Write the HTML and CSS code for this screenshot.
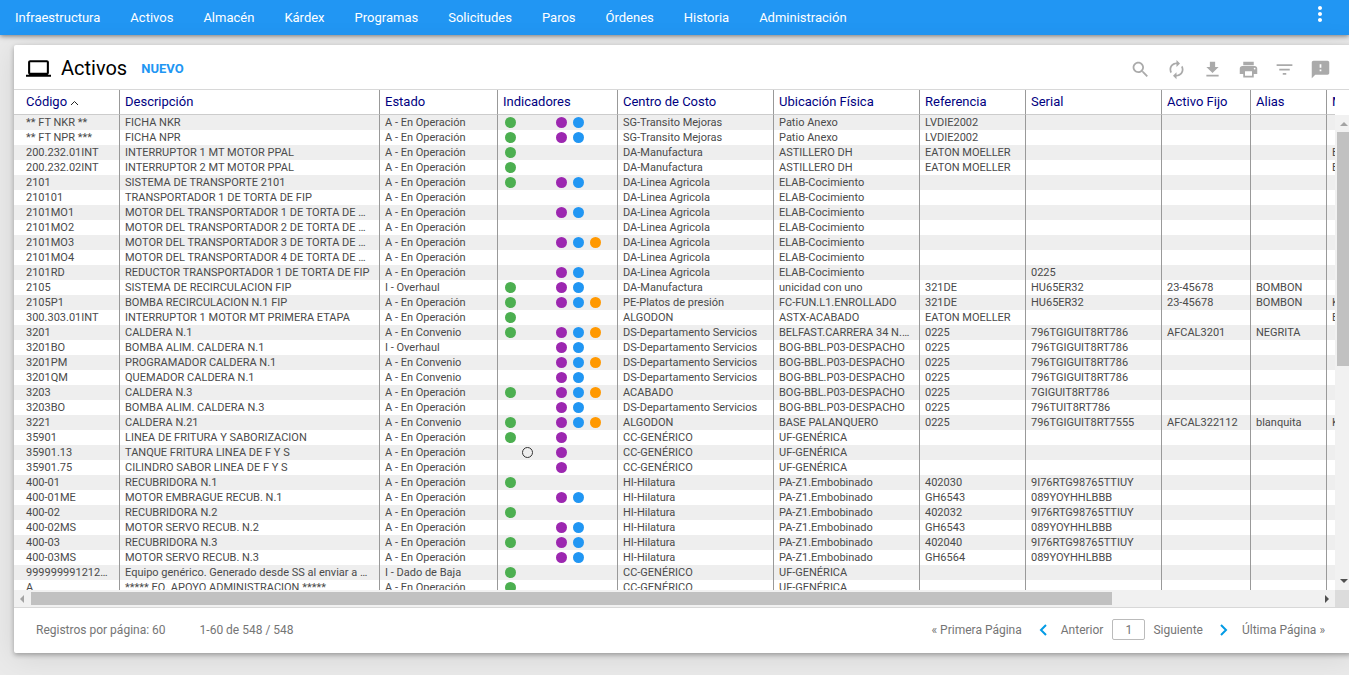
FILE: index.html
```html
<!DOCTYPE html>
<html lang="es">
<head>
  <meta charset="UTF-8" />
  <meta name="viewport" content="width=device-width, initial-scale=1.0"/>
  <title>Activos</title>
  <link rel="stylesheet" href="styles.css">
</head>
<body>
  <nav class="navbar">
    <a href="#">Infraestructura</a>
    <a href="#">Activos</a>
    <a href="#">Almacén</a>
    <a href="#">Kárdex</a>
    <a href="#">Programas</a>
    <a href="#">Solicitudes</a>
    <a href="#">Paros</a>
    <a href="#">Órdenes</a>
    <a href="#">Historia</a>
    <a href="#">Administración</a>
    <button class="more" aria-label="Más opciones">
      <svg viewBox="0 0 24 24"><path d="M12 8c1.1 0 2-.9 2-2s-.9-2-2-2-2 .9-2 2 .9 2 2 2zm0 2c-1.1 0-2 .9-2 2s.9 2 2 2 2-.9 2-2-.9-2-2-2zm0 6c-1.1 0-2 .9-2 2s.9 2 2 2 2-.9 2-2-.9-2-2-2z"/></svg>
    </button>
  </nav>

  <main class="panel">
    <header class="panel-head">
      <svg class="laptop" viewBox="0 0 24 24"><path d="M20 18c1.100 0 1.990-.9 1.990-2L22 6c0-1.100-.9-2-2-2H4c-1.100 0-2 .9-2 2v10c0 1.100.9 2 2 2H0v2h24v-2h-4zM4 6h16v10H4V6z"/></svg>
      <h1>Activos</h1>
      <button class="new">NUEVO</button>
      <div class="tools">
        <button aria-label="Buscar"><svg viewBox="0 0 24 24"><path d="M15.500 14h-.79l-.28-.27C15.410 12.590 16 11.110 16 9.500 16 5.910 13.090 3 9.500 3S3 5.910 3 9.500 5.910 16 9.500 16c1.610 0 3.090-.59 4.230-1.570l.27.28v.79l5 4.990L20.490 19l-4.990-5zm-6 0C7.010 14 5 11.990 5 9.500S7.010 5 9.500 5 14 7.010 14 9.500 11.990 14 9.500 14z"/></svg></button>
        <button aria-label="Actualizar"><svg viewBox="0 0 24 24"><path d="M12 6v3l4-4-4-4v3c-4.420 0-8 3.580-8 8 0 1.570.46 3.030 1.240 4.260L6.700 14.800c-.45-.83-.7-1.790-.7-2.800 0-3.310 2.690-6 6-6zm6.760 1.740L17.300 9.200c.44.84.7 1.790.7 2.800 0 3.310-2.690 6-6 6v-3l-4 4 4 4v-3c4.420 0 8-3.580 8-8 0-1.570-.46-3.030-1.240-4.260z"/></svg></button>
        <button aria-label="Descargar"><svg viewBox="0 0 24 24"><path d="M19 9h-4V3H9v6H5l7 7 7-7zM5 18v2h14v-2H5z"/></svg></button>
        <button aria-label="Imprimir"><svg viewBox="0 0 24 24"><path d="M19 8H5c-1.660 0-3 1.340-3 3v6h4v4h12v-4h4v-6c0-1.660-1.340-3-3-3zm-3 11H8v-5h8v5zm3-7c-.55 0-1-.45-1-1s.45-1 1-1 1 .45 1 1-.45 1-1 1zm-1-9H6v4h12V3z"/></svg></button>
        <button aria-label="Filtrar"><svg viewBox="0 0 24 24"><path d="M10 18h4v-2h-4v2zM3 6v2h18V6H3zm3 7h12v-2H6v2z"/></svg></button>
        <button aria-label="Comentarios"><svg viewBox="0 0 24 24"><path d="M20 2H4c-1.100 0-1.990.9-1.990 2L2 22l4-4h14c1.100 0 2-.9 2-2V4c0-1.100-.9-2-2-2zm-7 12h-2v-2h2v2zm0-4h-2V6h2v4z"/></svg></button>
      </div>
    </header>

    <div class="grid">
      <div class="grid-view">
        <table>
          <colgroup>
            <col class="c-codigo"><col class="c-desc"><col class="c-estado"><col class="c-ind"><col class="c-centro"><col class="c-ubic"><col class="c-ref"><col class="c-serial"><col class="c-fijo"><col class="c-alias"><col class="c-marca">
          </colgroup>
          <thead>
            <tr>
              <th>Código <svg class="sort" viewBox="0 0 9 6"><path d="M1 5l3.500-3.500L8 5"/></svg></th>
              <th>Descripción</th>
              <th>Estado</th>
              <th>Indicadores</th>
              <th>Centro de Costo</th>
              <th>Ubicación Física</th>
              <th>Referencia</th>
              <th>Serial</th>
              <th>Activo Fijo</th>
              <th>Alias</th>
              <th>Marca</th>
            </tr>
          </thead>
          <tbody id="rows"></tbody>
        </table>
      </div>
      <div class="vbar">
        <svg viewBox="0 0 17 17"><path class="off" d="M5 11l4-4 4 4z"/></svg>
        <div class="vtrack"><div class="vthumb"></div></div>
        <svg viewBox="0 0 17 17"><path d="M5 6l4 4 4-4z"/></svg>
      </div>
      <div class="hbar">
        <svg viewBox="0 0 17 17"><path class="off" d="M10 5v8L6 9z"/></svg>
        <div class="htrack"><div class="hthumb"></div></div>
        <svg viewBox="0 0 17 17"><path d="M7 5v8l4-4z"/></svg>
      </div>
      <div class="corner"></div>
    </div>

    <footer class="pager">
      <span>Registros por página: 60</span>
      <span class="range">1-60 de 548 / 548</span>
      <div class="pages">
        <a href="#">« Primera Página</a>
        <a href="#" class="prev"><svg viewBox="0 0 8 12"><path d="M7 1L2 6l5 5"/></svg>Anterior</a>
        <input type="text" value="1" aria-label="Página">
        <a href="#" class="next">Siguiente<svg viewBox="0 0 8 12"><path d="M1 1l5 5-5 5"/></svg></a>
        <a href="#">Última Página »</a>
      </div>
    </footer>
  </main>

  <script src="script.js"></script>
</body>
</html>
```

FILE: styles.css
```css
* {
  margin: 0;
  padding: 0;
  box-sizing: border-box;
}

body {
  display: flex;
  flex-direction: column;
  height: 100vh;
  overflow: hidden;
  background: #eaeaea;
  font-family: Roboto, sans-serif;
  color: #4a4a4a;
}

button {
  border: none;
  background: none;
  color: inherit;
  font-family: inherit;
  cursor: pointer;
}

a {
  color: inherit;
  text-decoration: none;
}

svg {
  display: block;
  fill: currentColor;
}

/* top menu */
.navbar {
  display: flex;
  align-items: center;
  flex: none;
  height: 35px;
  background: #2196f3;
  box-shadow: 0 1px 5px rgba(0, 0, 0, 0.5);
  color: #fff;
  font-size: 13px;
}

.navbar a {
  padding: 0 15px;
}

.more {
  margin: 0 17px 7px auto;
}

.more svg {
  width: 24px;
  height: 24px;
}

/* main card */
.panel {
  display: flex;
  flex-direction: column;
  flex: 1;
  min-height: 0;
  margin: 10px -3px 22px 14px;
  background: #fff;
  border-radius: 2px;
  box-shadow: 0 2px 5px rgba(0, 0, 0, 0.3), 0 4px 30px rgba(0, 0, 0, 0.1);
}

.panel-head {
  display: flex;
  align-items: center;
  flex: none;
  height: 45px;
  padding: 2px 21px 0 12px;
  border-bottom: 1px solid #d8d8d8;
  color: #000;
}

.laptop {
  width: 25px;
  height: 25px;
}

h1 {
  margin-left: 10px;
  font-size: 20px;
  font-weight: 400;
}

.new {
  margin-left: 14px;
  color: #2196f3;
  font-size: 13px;
  font-weight: 700;
}

.tools {
  display: flex;
  gap: 15px;
  margin-left: auto;
  padding-top: 3px;
  color: #aaa;
}

.tools svg {
  width: 21px;
  height: 21px;
}

/* table */
.grid {
  display: grid;
  grid-template-columns: 1fr 17px;
  grid-template-rows: 1fr 17px;
  flex: 1;
  min-height: 0;
}

.grid-view {
  min-width: 0;
  min-height: 0;
  overflow: auto;
  scrollbar-width: none;
}

table {
  width: 1574px;
  table-layout: fixed;
  border-collapse: separate;
  border-spacing: 0;
  font-size: 11px;
}

.c-codigo { width: 106px; }
.c-desc { width: 260px; }
.c-estado { width: 118px; }
.c-ind { width: 120px; }
.c-centro { width: 156px; }
.c-ubic { width: 146px; }
.c-ref { width: 106px; }
.c-serial { width: 136px; }
.c-fijo { width: 89px; }
.c-alias { width: 76px; }

th,
td {
  padding: 0 8px 0 5px;
  border-right: 1px solid #999;
  text-align: left;
  white-space: nowrap;
  overflow: hidden;
  text-overflow: ellipsis;
}

th:first-child,
td:first-child {
  padding-left: 12px;
}

th {
  position: sticky;
  top: 0;
  height: 25px;
  padding-bottom: 2px;
  background: #fff;
  border-bottom: 1px solid #ccc;
  color: #000080;
  font-size: 13px;
  font-weight: 400;
}

td {
  height: 15px;
  line-height: 15px;
}

tbody tr:nth-child(odd) {
  background: #eee;
}

.sort {
  display: inline-block;
  width: 9px;
  height: 6px;
  fill: none;
  stroke: #222;
}

.dots {
  display: grid;
  grid-template-columns: repeat(6, 17px);
}

.dots i {
  width: 11px;
  height: 11px;
  margin: 2px;
  border-radius: 50%;
}

.green { background: #4caf50; }
.ring { border: 1px solid #333; }
.purple { background: #9c27b0; }
.blue { background: #2196f3; }
.orange { background: #ff9800; }

/* scrollbars */
.vbar,
.hbar {
  display: flex;
  background: #f1f1f1;
  color: #505050;
}

.vbar {
  flex-direction: column;
  margin-top: 25px;
}

.vbar svg,
.hbar svg {
  flex: none;
  width: 17px;
  height: 17px;
}

.off {
  fill: #a3a3a3;
}

.vtrack,
.htrack {
  flex: 1;
}

.vthumb {
  height: 53%;
  margin: 0 2px;
  background: #c1c1c1;
}

.hthumb {
  width: 84%;
  height: 13px;
  margin-top: 2px;
  background: #c1c1c1;
}

.corner {
  background: #dcdcdc;
}

/* pager */
.pager {
  display: flex;
  align-items: center;
  flex: none;
  height: 46px;
  padding: 0 27px 2px 22px;
  border-top: 1px solid #d8d8d8;
  color: #757575;
  font-size: 12px;
}

.range {
  margin-left: 34px;
}

.pages {
  display: flex;
  align-items: center;
  margin-left: auto;
}

.prev,
.next {
  display: flex;
  align-items: center;
  gap: 14px;
}

.prev {
  margin: 0 9px 0 17px;
}

.next {
  gap: 17px;
  margin: 0 14px 0 8px;
}

.pages svg {
  width: 8px;
  height: 12px;
  fill: none;
  stroke: #039be5;
  stroke-width: 2;
}

.pages input {
  width: 33px;
  height: 21px;
  border: 1px solid #bbb;
  border-radius: 2px;
  color: #757575;
  font: inherit;
  text-align: center;
}
```

FILE: script.js
```js
const OP = 'A - En Operación';
const CV = 'A - En Convenio';
const LA = 'DA-Linea Agricola';
const DS = 'DS-Departamento Servicios';
const BOG = 'BOG-BBL.P03-DESPACHO';
const ELAB = 'ELAB-Cocimiento';
const PAZ = 'PA-Z1.Embobinado';

// g: green, r: ring, p: purple, b: blue, o: orange, -: empty
const dotClass = { g: 'green', r: 'ring', p: 'purple', b: 'blue', o: 'orange', '-': '' };

// codigo, descripcion, estado, indicadores, centro, ubicacion, referencia, serial, activo fijo, alias, marca
const data = [
  ['** FT NKR **', 'FICHA NKR', OP, 'g--pb', 'SG-Transito Mejoras', 'Patio Anexo', 'LVDIE2002'],
  ['** FT NPR ***', 'FICHA NPR', OP, 'g--pb', 'SG-Transito Mejoras', 'Patio Anexo', 'LVDIE2002'],
  ['200.232.01INT', 'INTERRUPTOR 1 MT MOTOR PPAL', OP, 'g', 'DA-Manufactura', 'ASTILLERO DH', 'EATON MOELLER', '', '', '', 'EATON'],
  ['200.232.02INT', 'INTERRUPTOR 2 MT MOTOR PPAL', OP, 'g', 'DA-Manufactura', 'ASTILLERO DH', 'EATON MOELLER', '', '', '', 'EATON'],
  ['2101', 'SISTEMA DE TRANSPORTE 2101', OP, 'g--pb', LA, ELAB],
  ['210101', 'TRANSPORTADOR 1 DE TORTA DE FIP', OP, '', LA, ELAB],
  ['2101MO1', 'MOTOR DEL TRANSPORTADOR 1 DE TORTA DE FIP', OP, '---pb', LA, ELAB],
  ['2101MO2', 'MOTOR DEL TRANSPORTADOR 2 DE TORTA DE FIP', OP, '', LA, ELAB],
  ['2101MO3', 'MOTOR DEL TRANSPORTADOR 3 DE TORTA DE FIP', OP, '---pbo', LA, ELAB],
  ['2101MO4', 'MOTOR DEL TRANSPORTADOR 4 DE TORTA DE FIP', OP, '', LA, ELAB],
  ['2101RD', 'REDUCTOR TRANSPORTADOR 1 DE TORTA DE FIP', OP, '---pb', LA, ELAB, '', '0225'],
  ['2105', 'SISTEMA DE RECIRCULACION FIP', 'I - Overhaul', 'g--pb', 'DA-Manufactura', 'unicidad con uno', '321DE', 'HU65ER32', '23-45678', 'BOMBON'],
  ['2105P1', 'BOMBA RECIRCULACION N.1 FIP', OP, 'g--pbo', 'PE-Platos de presión', 'FC-FUN.L1.ENROLLADO', '321DE', 'HU65ER32', '23-45678', 'BOMBON', 'KSB'],
  ['300.303.01INT', 'INTERRUPTOR 1 MOTOR MT PRIMERA ETAPA', OP, 'g', 'ALGODON', 'ASTX-ACABADO', 'EATON MOELLER', '', '', '', 'EATON'],
  ['3201', 'CALDERA N.1', CV, 'g--pbo', DS, 'BELFAST.CARRERA 34 N.123', '0225', '796TGIGUIT8RT786', 'AFCAL3201', 'NEGRITA'],
  ['3201BO', 'BOMBA ALIM. CALDERA N.1', 'I - Overhaul', '---pb', DS, BOG, '0225', '796TGIGUIT8RT786'],
  ['3201PM', 'PROGRAMADOR CALDERA N.1', CV, '---pbo', DS, BOG, '0225', '796TGIGUIT8RT786'],
  ['3201QM', 'QUEMADOR CALDERA N.1', CV, '---pb', DS, BOG, '0225', '796TGIGUIT8RT786'],
  ['3203', 'CALDERA N.3', OP, 'g--pbo', 'ACABADO', BOG, '0225', '7GIGUIT8RT786'],
  ['3203BO', 'BOMBA ALIM. CALDERA N.3', OP, '---pb', DS, BOG, '0225', '796TUIT8RT786'],
  ['3221', 'CALDERA N.21', CV, 'g--pbo', 'ALGODON', 'BASE PALANQUERO', '0225', '796TGIGUIT8RT7555', 'AFCAL322112', 'blanquita', 'KSB'],
  ['35901', 'LINEA DE FRITURA Y SABORIZACION', OP, 'g--p', 'CC-GENÉRICO', 'UF-GENÉRICA'],
  ['35901.13', 'TANQUE FRITURA LINEA DE F Y S', OP, '-r-p', 'CC-GENÉRICO', 'UF-GENÉRICA'],
  ['35901.75', 'CILINDRO SABOR LINEA DE F Y S', OP, '---p', 'CC-GENÉRICO', 'UF-GENÉRICA'],
  ['400-01', 'RECUBRIDORA N.1', OP, 'g', 'HI-Hilatura', PAZ, '402030', '9I76RTG98765TTIUY'],
  ['400-01ME', 'MOTOR EMBRAGUE RECUB. N.1', OP, '---pb', 'HI-Hilatura', PAZ, 'GH6543', '089YOYHHLBBB'],
  ['400-02', 'RECUBRIDORA N.2', OP, 'g', 'HI-Hilatura', PAZ, '402032', '9I76RTG98765TTIUY'],
  ['400-02MS', 'MOTOR SERVO RECUB. N.2', OP, '---pb', 'HI-Hilatura', PAZ, 'GH6543', '089YOYHHLBBB'],
  ['400-03', 'RECUBRIDORA N.3', OP, 'g--pb', 'HI-Hilatura', PAZ, '402040', '9I76RTG98765TTIUY'],
  ['400-03MS', 'MOTOR SERVO RECUB. N.3', OP, '---pb', 'HI-Hilatura', PAZ, 'GH6564', '089YOYHHLBBB'],
  ['999999991212121', 'Equipo genérico. Generado desde SS al enviar a mantenimiento', 'I - Dado de Baja', 'g', 'CC-GENÉRICO', 'UF-GENÉRICA'],
  ['A', '***** EQ. APOYO ADMINISTRACION *****', OP, 'g', 'CC-GENÉRICO', 'UF-GENÉRICA']
];

function dots(codes) {
  return '<div class="dots">' + [...codes].map(c => `<i class="${dotClass[c]}"></i>`).join('') + '</div>';
}

let html = '';
for (const row of data) {
  html += '<tr>';
  for (let i = 0; i < 11; i++) {
    const value = row[i] || '';
    html += '<td>' + (i === 3 ? dots(value) : value) + '</td>';
  }
  html += '</tr>';
}
document.getElementById('rows').innerHTML = html;
```
